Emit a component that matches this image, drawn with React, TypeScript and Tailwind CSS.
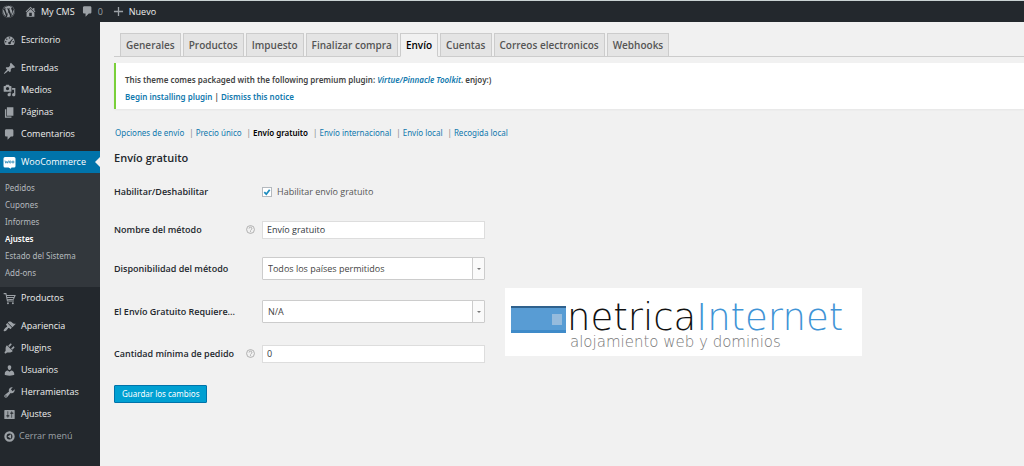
import type { ReactNode } from 'react'
import { FaWordpress } from 'react-icons/fa'

type IconName =
  | 'dashboard'
  | 'post'
  | 'media'
  | 'page'
  | 'comments'
  | 'appearance'
  | 'plugins'
  | 'users'
  | 'tools'
  | 'settings'
  | 'home'
  | 'plus'
  | 'collapse'

const iconPaths: Record<IconName, string> = {
  dashboard:
    'M3.76 17h12.48A8 8 0 1 0 3.76 17zM10 4.9a1.1 1.1 0 1 1 0 2.2 1.1 1.1 0 0 1 0-2.2zM5.8 6.8a1.1 1.1 0 1 1 0 2.2 1.1 1.1 0 0 1 0-2.2zM14.6 7l.9.7-3.6 5.4a2 2 0 1 1-1.6-1.3zM4.2 10.9a1.1 1.1 0 1 1 0 2.2 1.1 1.1 0 0 1 0-2.2zM15.8 10.9a1.1 1.1 0 1 1 0 2.2 1.1 1.1 0 0 1 0-2.2z',
  post: 'M10.44 3.02l1.82-1.82 6.36 6.35-1.83 1.82c-1.05-.68-2.48-.57-3.41.36l-.75.75c-.92.93-1.04 2.35-.35 3.41l-1.83 1.82-2.41-2.41-2.8 2.79c-.42.42-3.38 2.71-3.8 2.29s1.86-3.39 2.28-3.81l2.79-2.79L4.1 9.36l1.83-1.82c1.05.69 2.48.57 3.4-.36l.75-.75c.93-.92 1.05-2.35.36-3.41z',
  media:
    'M13 11V4c0-.55-.45-1-1-1h-1.67L9 1H5L3.67 3H2c-.55 0-1 .45-1 1v7c0 .55.45 1 1 1h10c.55 0 1-.45 1-1zM7 4.5c1.38 0 2.5 1.12 2.5 2.5S8.38 9.5 7 9.5 4.5 8.38 4.5 7 5.62 4.5 7 4.5zM14 6h5v10.5c0 1.38-1.12 2.5-2.5 2.5S14 17.88 14 16.5s1.12-2.5 2.5-2.5c.17 0 .34.02.5.05V9h-3V6zm-4 8.05V13h2v3.5c0 1.38-1.12 2.5-2.5 2.5S7 17.88 7 16.5 8.12 14 9.5 14c.17 0 .34.02.5.05z',
  page: 'M6 15V2h10v13H6zm-1 1h8v2H3V5h2v11z',
  comments:
    'M5 2h9c1.1 0 2 .9 2 2v7c0 1.1-.9 2-2 2h-2l-5 5v-5H5c-1.1 0-2-.9-2-2V4c0-1.1.9-2 2-2z',
  appearance:
    'M14.48 11.06L7.41 3.99l1.5-1.5c.5-.56 2.3-.47 3.51.32 1.21.8 1.43 1.28 2.91 2.1 1.18.64 2.45 1.26 4.45.85zm-.71.71L6.7 4.7 4.93 6.47c-.39.39-.39 1.02 0 1.41l1.06 1.06c.39.39.39 1.03 0 1.42-.6.6-1.43 1.11-2.21 1.69-.35.26-.7.53-1.01.84C1.43 14.23.4 16.08 1.4 17.07c.99 1 2.84-.03 4.18-1.36.31-.31.58-.66.85-1.02.57-.78 1.08-1.61 1.69-2.21.39-.39 1.02-.39 1.41 0l1.06 1.06c.39.39 1.02.39 1.41 0z',
  plugins:
    'M13.11 4.36L9.87 7.6 8 5.73l3.24-3.24c.35-.34 1.05-.2 1.56.32.52.51.66 1.21.31 1.55zm-8 1.77l.91-1.12 9.01 9.01-1.19.84c-.71.71-2.63 1.16-3.82 1.16H6.14L4.9 17.26c-.59.59-1.54.59-2.12 0-.59-.58-.59-1.53 0-2.12l1.24-1.24v-3.88c0-1.13.4-3.19 1.09-3.89zm7.26 3.97l3.24-3.24c.34-.35 1.04-.21 1.55.31.52.51.66 1.21.31 1.55l-3.24 3.25z',
  users:
    'M10 9.25c-2.27 0-2.73-3.44-2.73-3.44C7 4.02 7.82 2 9.97 2c2.16 0 2.98 2.02 2.71 3.81 0 0-.41 3.44-2.68 3.44zm0 2.57L12.72 10c2.39 0 4.52 2.33 4.52 4.53v2.49s-3.65 1.13-7.24 1.13c-3.65 0-7.24-1.13-7.24-1.13v-2.49c0-2.25 1.94-4.48 4.47-4.48z',
  tools:
    'M16.68 9.77c-1.34 1.34-3.3 1.67-4.95.99l-5.41 6.52c-.99.99-2.59.99-3.58 0s-.99-2.59 0-3.57l6.52-5.42c-.68-1.65-.35-3.61.99-4.95 1.28-1.28 3.12-1.62 4.72-1.06l-2.89 2.89 2.82 2.82 2.86-2.87c.53 1.58.18 3.39-1.08 4.65zM3.81 16.21c.4.39 1.04.39 1.43 0 .4-.4.4-1.04 0-1.43-.39-.4-1.03-.4-1.43 0-.39.39-.39 1.03 0 1.43z',
  settings:
    'M18 16V4c0-.55-.45-1-1-1H3c-.55 0-1 .45-1 1v12c0 .55.45 1 1 1h14c.55 0 1-.45 1-1zM8 11h1c.55 0 1 .45 1 1s-.45 1-1 1H8v1.5c0 .28-.22.5-.5.5s-.5-.22-.5-.5V13H6c-.55 0-1-.45-1-1s.45-1 1-1h1V5.5c0-.28.22-.5.5-.5s.5.22.5.5V11zm5-2h-1c-.55 0-1-.45-1-1s.45-1 1-1h1V5.5c0-.28.22-.5.5-.5s.5.22.5.5V7h1c.55 0 1 .45 1 1s-.45 1-1 1h-1v5.5c0 .28-.22.5-.5.5s-.5-.22-.5-.5V9z',
  home: 'M16 8.5l1.53 1.53-1.06 1.06L10 4.6l-6.47 6.49-1.06-1.06L10 2.5l4 4v-2h2v4zm-6-2.46l6 5.99V18H4v-5.97zM12 17v-5H8v5h4z',
  plus: 'M17 9v2h-6v6H9v-6H3V9h6V3h2v6h6z',
  collapse: 'M10 2a8 8 0 1 1 0 16 8 8 0 0 1 0-16zM10 5.500a4.500 4.500 0 1 0 0 9 4.500 4.500 0 0 0 0-9zM12.500 6.500v7L7 10z',
}

function Icon({ name, className = 'h-[13px] w-[13px]' }: { name: IconName; className?: string }) {
  return (
    <svg viewBox="0 0 20 20" fill="currentColor" fillRule="evenodd" aria-hidden="true" className={`shrink-0 ${className}`}>
      <path d={iconPaths[name]} />
    </svg>
  )
}

function CartIcon() {
  return (
    <svg viewBox="0 0 20 20" fill="none" stroke="currentColor" strokeWidth="1.6" aria-hidden="true" className="h-[13px] w-[13px] shrink-0">
      <path d="M1 2.500h3.500l2.300 11.500h10M5 5.500h13.500l-2.500 5.800-9.500.7M6 8.500h11" />
      <circle cx="7.600" cy="17.200" r="1.500" fill="currentColor" stroke="none" />
      <circle cx="15.200" cy="17.200" r="1.500" fill="currentColor" stroke="none" />
    </svg>
  )
}

function WooIcon() {
  return (
    <svg viewBox="0 0 13 13" aria-hidden="true" className="h-[13px] w-[13px] shrink-0">
      <path d="M2 1h9q1.500 0 1.500 1.500v7.500q0 1.500-1.500 1.500H8.500L7.800 12.800 5.500 11.500H2Q.5 11.500 .5 10V2.500Q.5 1 2 1z" fill="#fff" />
      <path d="M2 4.600l.8 2.600 1-1.800 .9 1.800 .8-2.600" fill="none" stroke="#0073aa" strokeWidth=".7" />
      <circle cx="7.200" cy="6" r="1" fill="none" stroke="#0073aa" strokeWidth=".7" />
      <circle cx="10" cy="6" r="1" fill="none" stroke="#0073aa" strokeWidth=".7" />
    </svg>
  )
}

type MenuItem = { label: string; icon: ReactNode }

const contentMenu: MenuItem[] = [
  { label: 'Entradas', icon: <Icon name="post" /> },
  { label: 'Medios', icon: <Icon name="media" /> },
  { label: 'Páginas', icon: <Icon name="page" /> },
  { label: 'Comentarios', icon: <Icon name="comments" /> },
]

const siteMenu: MenuItem[] = [
  { label: 'Apariencia', icon: <Icon name="appearance" /> },
  { label: 'Plugins', icon: <Icon name="plugins" /> },
  { label: 'Usuarios', icon: <Icon name="users" /> },
  { label: 'Herramientas', icon: <Icon name="tools" /> },
  { label: 'Ajustes', icon: <Icon name="settings" /> },
]

const wooSubmenu = ['Pedidos', 'Cupones', 'Informes', 'Ajustes', 'Estado del Sistema', 'Add-ons']

const tabs = [
  'Generales',
  'Productos',
  'Impuesto',
  'Finalizar compra',
  'Envío',
  'Cuentas',
  'Correos electronicos',
  'Webhooks',
]

const sections = [
  'Opciones de envío',
  'Precio único',
  'Envío gratuito',
  'Envío internacional',
  'Envío local',
  'Recogida local',
]

function MenuLink({ item }: { item: MenuItem }) {
  return (
    <a href="#" className="flex h-[22px] items-center gap-[5px] pl-[3px] text-[#eee]">
      <span className="text-[#9ca1a6]">{item.icon}</span>
      {item.label}
    </a>
  )
}

function AdminBar() {
  return (
    <header className="flex h-[22px] items-center border-t border-[#c9d2d3] bg-[#23282d] pl-[2px] text-[9px] text-[#eee]">
      <a href="#" aria-label="WordPress" className="text-[#9ca1a6]">
        <FaWordpress className="h-[13px] w-[13px]" />
      </a>
      <a href="#" className="ml-[9px] flex items-center gap-1">
        <Icon name="home" className="h-[13px] w-[13px] text-[#9ca1a6]" />
        My CMS
      </a>
      <a href="#" className="ml-[6px] flex items-center gap-1 text-[#9ca1a6]">
        <Icon name="comments" />0
      </a>
      <a href="#" className="ml-[9px] flex items-center gap-1">
        <Icon name="plus" className="h-[13px] w-[13px] text-[#9ca1a6]" />
        Nuevo
      </a>
    </header>
  )
}

function Sidebar() {
  return (
    <nav className="w-[100px] shrink-0 bg-[#23282d] pt-[7px] text-[9px]">
      <MenuLink item={{ label: 'Escritorio', icon: <Icon name="dashboard" /> }} />
      <div className="mt-[6px]">
        {contentMenu.map((item) => (
          <MenuLink key={item.label} item={item} />
        ))}
      </div>
      <a href="#" className="relative mt-[6px] flex h-[22px] items-center gap-[5px] bg-[#0073aa] pl-[3px] text-white">
        <WooIcon />
        WooCommerce
        <span className="absolute right-0 top-[6px] border-y-5 border-r-5 border-y-transparent border-r-[#f1f1f1]" />
      </a>
      <ul className="bg-[#32373c] py-[6px] font-['Noto_Sans',sans-serif] text-[8px]">
        {wooSubmenu.map((label) => (
          <li key={label}>
            <a
              href="#"
              className={`flex h-[17px] items-center pl-[5px] ${label === 'Ajustes' ? 'font-semibold text-white' : 'text-[#b4b9be]'}`}
            >
              {label}
            </a>
          </li>
        ))}
      </ul>
      <MenuLink item={{ label: 'Productos', icon: <CartIcon /> }} />
      <div className="mt-[6px]">
        {siteMenu.map((item) => (
          <MenuLink key={item.label} item={item} />
        ))}
      </div>
      <button type="button" className="flex h-[22px] items-center gap-[3px] pl-[3px] text-[#9ca1a6]">
        <Icon name="collapse" />
        Cerrar menú
      </button>
    </nav>
  )
}

function HelpTip() {
  return (
    <svg viewBox="0 0 16 16" fill="none" stroke="#a5a5a5" strokeWidth="1.500" aria-hidden="true" className="h-[9px] w-[9px]">
      <circle cx="8" cy="8" r="7" />
      <path d="M5.500 6.300a2.500 2.500 0 1 1 3.600 2.200q-1.100.6-1.100 1.500M8 11v1.700" />
    </svg>
  )
}

type FieldRowProps = { id: string; label: string; help?: boolean; className: string; children: ReactNode }

function FieldRow({ id, label, help, className, children }: FieldRowProps) {
  return (
    <div className={`flex h-[23px] items-center ${className}`}>
      <label htmlFor={id} className="w-[132px] font-semibold text-[#23282d]">
        {label}
      </label>
      <span className="w-4">{help && <HelpTip />}</span>
      {children}
    </div>
  )
}

function TextField({ id, value }: { id: string; value: string }) {
  return (
    <input
      id={id}
      type="text"
      defaultValue={value}
      className="h-[18px] w-[223px] border border-[#ddd] bg-white px-1 text-[#32373c]"
    />
  )
}

function SelectBox({ id, value }: { id: string; value: string }) {
  return (
    <div className="relative w-[223px]">
      <select
        id={id}
        defaultValue={value}
        className="block h-[23px] w-full appearance-none rounded-[1px] border border-[#ccc] bg-white pl-[5px] text-[#444]"
      >
        <option>{value}</option>
      </select>
      <span className="pointer-events-none absolute inset-y-px right-px flex w-[12px] items-center justify-center border-l border-[#ccc] bg-[#fafafa]">
        <span className="border-x-2 border-t-2 border-x-transparent border-t-[#777]" />
      </span>
    </div>
  )
}

function LogoCard() {
  return (
    <div className="absolute left-[405px] top-[266px] flex h-[68px] w-[357px] bg-white pl-[6px] font-['DejaVu_Sans',sans-serif] font-extralight">
      <svg viewBox="0 0 55 27" aria-hidden="true" className="mt-[18px] h-[27px] w-[55px]">
        <path fill="#589cd4" d="M0 0h55v27H0z" />
        <path fill="#2f618d" d="M0 0h55v2H0z" />
        <path fill="#3f8bc9" d="M0 24h55v3H0z" />
        <path fill="#95bbdd" d="M41 8h10v11H41z" />
      </svg>
      <div className="whitespace-nowrap pl-px pt-[13px]">
        <p className="text-[37px] leading-[34px] text-[#111]">
          netrica<span className="text-[#3f94d6]">Internet</span>
        </p>
        <p className="pl-[3px] text-[15px] leading-[14px] text-[#777]">alojamiento web y dominios</p>
      </div>
    </div>
  )
}

export default function App() {
  return (
    <div className="flex min-h-screen flex-col bg-[#f1f1f1] font-['Open_Sans',sans-serif]">
      <AdminBar />
      <div className="flex grow">
        <Sidebar />
        <main className="relative grow pl-[14px] text-[9px] text-[#444]">
          <div className="mt-[11px] flex gap-[2px] border-b border-[#ccc] pl-[6px] text-[10px] font-semibold">
            {tabs.map((tab) => (
              <a
                key={tab}
                href="#"
                className={`-mb-px flex h-6 items-center border border-[#ccc] px-[5px] ${
                  tab === 'Envío' ? 'border-b-[#f1f1f1] bg-[#f1f1f1] text-black' : 'bg-[#e4e4e4] text-[#555]'
                }`}
              >
                {tab}
              </a>
            ))}
          </div>

          <div className="mt-[6px] flex h-[46px] flex-col justify-center border-l-2 border-[#7ad03a] bg-white pl-[9px] pt-1 font-['Noto_Sans',sans-serif] text-[8px] font-semibold leading-[17px] shadow-xs">
            <p>
              This theme comes packaged with the following premium plugin:{' '}
              <a href="#" className="italic text-[#0f78ad]">
                Virtue/Pinnacle Toolkit
              </a>
              . enjoy:)
            </p>
            <p>
              <a href="#" className="text-[#0f78ad]">
                Begin installing plugin
              </a>{' '}
              |{' '}
              <a href="#" className="text-[#0f78ad]">
                Dismiss this notice
              </a>
            </p>
          </div>

          <ul className="mt-4 flex h-4 items-center pl-px font-['Noto_Sans',sans-serif] text-[8px]">
            {sections.map((section, index) => (
              <li key={section}>
                {index > 0 && <span className="pl-[5px] pr-[2px] text-[#888]">|</span>}
                <a href="#" className={section === 'Envío gratuito' ? 'font-semibold text-black' : 'text-[#0f78ad]'}>
                  {section}
                </a>
              </li>
            ))}
          </ul>

          <h3 className="mt-[9px] text-[11px] font-semibold leading-4 text-[#23282d]">Envío gratuito</h3>

          <form onSubmit={(event) => event.preventDefault()}>
            <FieldRow id="enabled" label="Habilitar/Deshabilitar" className="mt-[14px]">
              <label className="flex items-center gap-[5px] text-[#555]">
                <span className="relative">
                  <input
                    id="enabled"
                    type="checkbox"
                    defaultChecked
                    className="peer block h-[10px] w-[10px] appearance-none border border-[#b4b9be] bg-white"
                  />
                  <svg
                    viewBox="0 0 10 10"
                    fill="none"
                    stroke="#1e8cbe"
                    strokeWidth="1.800"
                    aria-hidden="true"
                    className="pointer-events-none absolute inset-0 hidden peer-checked:block"
                  >
                    <path d="M2.300 5.200l2 2 3.400-4.400" />
                  </svg>
                </span>
                Habilitar envío gratuito
              </label>
            </FieldRow>
            <FieldRow id="title" label="Nombre del método" help className="mt-[15px]">
              <TextField id="title" value="Envío gratuito" />
            </FieldRow>
            <FieldRow id="availability" label="Disponibilidad del método" className="mt-4">
              <SelectBox id="availability" value="Todos los países permitidos" />
            </FieldRow>
            <FieldRow id="requires" label="El Envío Gratuito Requiere..." className="mt-5">
              <SelectBox id="requires" value="N/A" />
            </FieldRow>
            <FieldRow id="min-amount" label="Cantidad mínima de pedido" help className="mt-[19px]">
              <TextField id="min-amount" value="0" />
            </FieldRow>
            <button
              type="submit"
              className="mt-5 h-[18px] rounded-[1px] border border-[#0073aa] bg-[#00a0d2] px-[7px] font-['Noto_Sans',sans-serif] text-[8px] text-white"
            >
              Guardar los cambios
            </button>
          </form>

          <LogoCard />
        </main>
      </div>
    </div>
  )
}
